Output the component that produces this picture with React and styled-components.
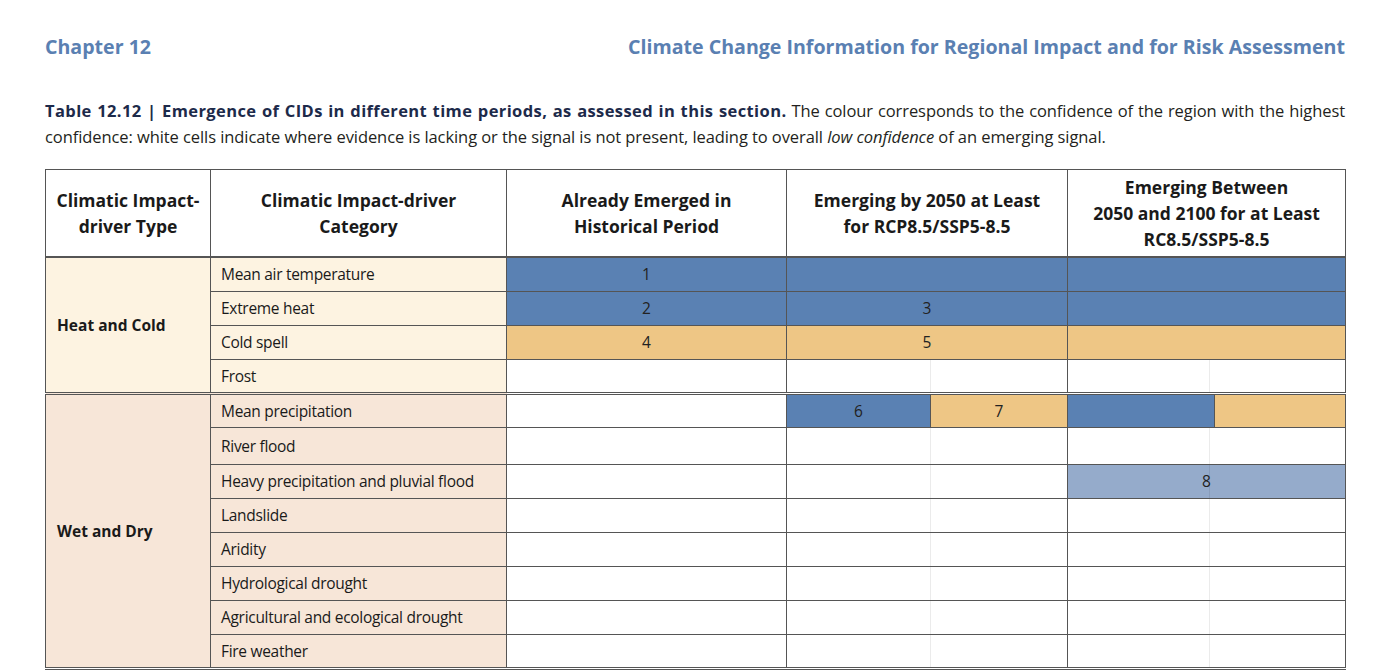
import React from 'react';
import styled, { createGlobalStyle } from 'styled-components';

const GlobalStyle = createGlobalStyle`
  html, body {
    margin: 0;
    padding: 0;
    background: #ffffff;
    height: 670px;
    overflow: hidden;
  }
  body {
    font-family: "Open Sans", "Liberation Sans", sans-serif;
    color: #231f20;
  }
`;

const BLUE = '#5a81b3';
const ORANGE = '#eec685';
const LIGHT_BLUE = '#95abcb';
const LINE = '#555555';

const groups = [
  {
    type: 'Heat and Cold',
    bg: '#fdf3e1',
    rows: [
      { name: 'Mean air temperature', cells: [['blue', '1', 1], ['blue', '', 2], ['blue', '', 2]] },
      { name: 'Extreme heat', cells: [['blue', '2', 1], ['blue', '3', 2], ['blue', '', 2]] },
      { name: 'Cold spell', cells: [['orange', '4', 1], ['orange', '5', 2], ['orange', '', 2]] },
      { name: 'Frost', cells: [['white', '', 1], ['white', '', 2, true], ['white', '', 2, true]] },
    ],
  },
  {
    type: 'Wet and Dry',
    bg: '#f7e6d8',
    rows: [
      { name: 'Mean precipitation', cells: [['white', '', 1], ['blue', '6', 1], ['orange', '7', 1], ['blue', '', 1], ['orange', '', 1]] },
      { name: 'River flood', tall: true, cells: [['white', '', 1], ['white', '', 2, true], ['white', '', 2, true]] },
      { name: 'Heavy precipitation and pluvial flood', cells: [['white', '', 1], ['white', '', 2, true], ['light', '8', 2, true]] },
      { name: 'Landslide', cells: [['white', '', 1], ['white', '', 2, true], ['white', '', 2, true]] },
      { name: 'Aridity', cells: [['white', '', 1], ['white', '', 2, true], ['white', '', 2, true]] },
      { name: 'Hydrological drought', cells: [['white', '', 1], ['white', '', 2, true], ['white', '', 2, true]] },
      { name: 'Agricultural and ecological drought', cells: [['white', '', 1], ['white', '', 2, true], ['white', '', 2, true]] },
      { name: 'Fire weather', cells: [['white', '', 1], ['white', '', 2, true], ['white', '', 2, true]] },
    ],
  },
];

const fills = { blue: BLUE, orange: ORANGE, light: LIGHT_BLUE, white: '#ffffff' };

class App extends React.Component {
  renderCells(cells) {
    return cells.map((c, i) => {
      const [fill, label, span, faint] = c;
      return (
        <ValueCell key={i} colSpan={span} $fill={fills[fill]} $faint={faint && span === 2}>
          {label}
        </ValueCell>
      );
    });
  }

  render() {
    return (
      <Page>
        <GlobalStyle />
        <RunningHead>
          <span>Chapter 12</span>
          <span>Climate Change Information for Regional Impact and for Risk Assessment</span>
        </RunningHead>

        <Caption>
          <b>Table 12.12 | Emergence of CIDs in different time periods, as assessed in this section.</b>{' '}
          The colour corresponds to the confidence of the region with the highest confidence: white cells
          indicate where evidence is lacking or the signal is not present, leading to overall{' '}
          <i>low confidence</i> of an emerging signal.
        </Caption>

        <Table>
          <colgroup>
            <col style={{ width: 165 }} />
            <col style={{ width: 296 }} />
            <col style={{ width: 280 }} />
            <col style={{ width: 144 }} />
            <col style={{ width: 137 }} />
            <col style={{ width: 147 }} />
            <col style={{ width: 131 }} />
          </colgroup>
          <thead>
            <tr>
              <HeadCell>Climatic Impact-<br />driver Type</HeadCell>
              <HeadCell>Climatic Impact-driver<br />Category</HeadCell>
              <HeadCell>Already Emerged in<br />Historical Period</HeadCell>
              <HeadCell colSpan={2}>Emerging by 2050 at Least<br />for RCP8.5/SSP5-8.5</HeadCell>
              <HeadCell colSpan={2}>Emerging Between<br />2050 and 2100 for at Least<br />RC8.5/SSP5-8.5</HeadCell>
            </tr>
          </thead>
          {groups.map((g) => (
            <Group key={g.type}>
              {g.rows.map((r, i) => (
                <Row key={r.name} $tall={r.tall}>
                  {i === 0 ? (
                    <TypeCell rowSpan={g.rows.length} $bg={g.bg}>{g.type}</TypeCell>
                  ) : null}
                  <CategoryCell $bg={g.bg}>{r.name}</CategoryCell>
                  {this.renderCells(r.cells)}
                </Row>
              ))}
            </Group>
          ))}
        </Table>
      </Page>
    );
  }
}

const Page = styled.div`
  padding: 33px 39px 0 45px;
`;

const RunningHead = styled.div`
  display: flex;
  justify-content: space-between;
  align-items: center;
  color: #5a80b2;
  font-weight: 700;
  font-size: 19.6px;
  line-height: 28px;
`;

const Caption = styled.p`
  margin: 37px 0 0;
  font-size: 16.5px;
  line-height: 26px;
  text-align: justify;
  color: #231f20;
  letter-spacing: -0.08px;

  b {
    color: #1d2a4a;
    font-weight: 700;
    letter-spacing: 0.4px;
  }
`;

const Table = styled.table`
  margin-top: 19px;
  width: 1300px;
  table-layout: fixed;
  border-collapse: collapse;
  border: 1px solid #888;
`;

const Group = styled.tbody`
  border-bottom: 3px double ${LINE};
`;

const HeadCell = styled.th`
  height: 86px;
  padding: 0 8px;
  border: 1px solid ${LINE};
  border-bottom: 2px solid ${LINE};
  font-size: 17.5px;
  line-height: 26px;
  font-weight: 700;
  color: #1a1a1a;
  text-align: center;
  vertical-align: middle;
`;

const Row = styled.tr`
  height: ${(p) => (p.$tall ? '37px' : '34px')};
`;

const TypeCell = styled.td`
  background: ${(p) => p.$bg};
  border: 1px solid ${LINE};
  padding: 0 11px;
  font-weight: 700;
  font-size: 15.5px;
  color: #1a1a1a;
  vertical-align: middle;
`;

const CategoryCell = styled.td`
  background: ${(p) => p.$bg};
  border: 1px solid ${LINE};
  padding: 0 10px;
  font-size: 15.5px;
  color: #1a1a1a;
  white-space: nowrap;
  letter-spacing: -0.3px;
`;

const ValueCell = styled.td`
  position: relative;
  background: ${(p) => p.$fill};
  border: 1px solid ${LINE};
  text-align: center;
  font-size: 15.5px;
  color: #222;

  &::after {
    content: '';
    display: ${(p) => (p.$faint ? 'block' : 'none')};
    position: absolute;
    top: 0;
    bottom: 0;
    left: 51%;
    width: 1px;
    background: rgba(0, 0, 0, 0.08);
  }
`;

export default App;
